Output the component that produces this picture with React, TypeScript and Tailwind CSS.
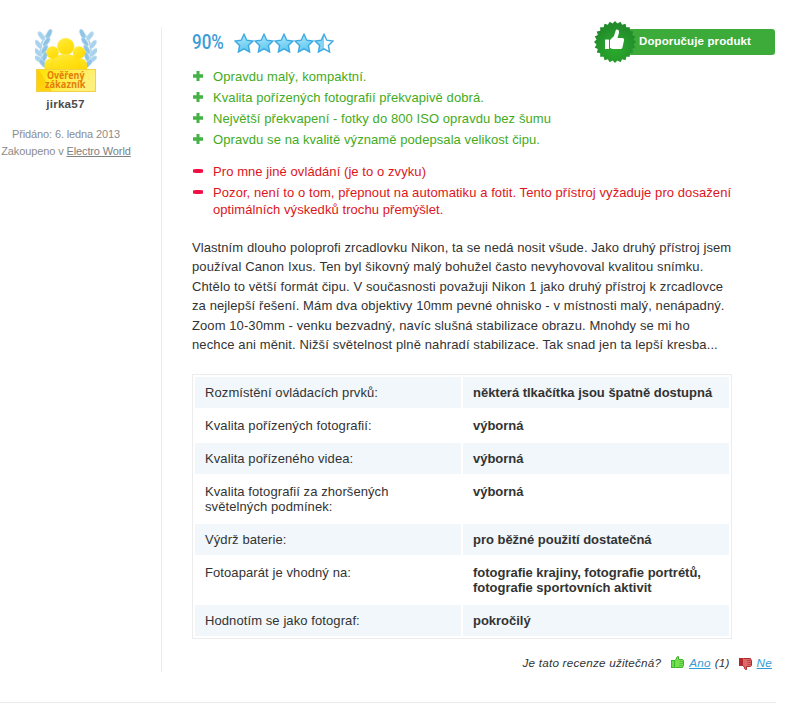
import React from "react";

const pros = [
  "Opravdu malý, kompaktní.",
  "Kvalita pořízených fotografií překvapivě dobrá.",
  "Největší překvapení - fotky do 800 ISO opravdu bez šumu",
  "Opravdu se na kvalitě významě podepsala velikost čipu.",
];

const cons = [
  ["Pro mne jiné ovládání (je to o zvyku)"],
  [
    "Pozor, není to o tom, přepnout na automatiku a fotit. Tento přístroj vyžaduje pro dosažení",
    "optimálních výskedků trochu přemýšlet.",
  ],
];

const review = [
  ["Vlastním dlouho poloprofi zrcadlovku Nikon, ta se nedá nosit všude. Jako druhý přístroj jsem", "tracking-[0.08px]"],
  ["používal Canon Ixus. Ten byl šikovný malý bohužel často nevyhovoval kvalitou snímku.", "tracking-[0.13px]"],
  ["Chtělo to větší formát čipu. V současnosti považuji Nikon 1 jako druhý přístroj k zrcadlovce", "tracking-[0.11px]"],
  ["za nejlepší řešení. Mám dva objektivy 10mm pevné ohnisko - v místnosti malý, nenápadný.", "tracking-[0.1px]"],
  ["Zoom 10-30mm - venku bezvadný, navíc slušná stabilizace obrazu. Mnohdy se mi ho", "tracking-[0.09px]"],
  ["nechce ani měnit. Nižší světelnost plně nahradí stabilizace. Tak snad jen ta lepší kresba...", "tracking-[0.11px]"],
];

const params: [string[], string[]][] = [
  [["Rozmístění ovládacích prvků:"], ["některá tlkačítka jsou špatně dostupná"]],
  [["Kvalita pořízených fotografií:"], ["výborná"]],
  [["Kvalita pořízeného videa:"], ["výborná"]],
  [["Kvalita fotografií za zhoršených", "světelných podmínek:"], ["výborná"]],
  [["Výdrž baterie:"], ["pro běžné použití dostatečná"]],
  [["Fotoaparát je vhodný na:"], ["fotografie krajiny, fotografie portrétů,", "fotografie sportovních aktivit"]],
  [["Hodnotím se jako fotograf:"], ["pokročilý"]],
];

const Lines = ({ lines }: { lines: string[] }) => (
  <>
    {lines.map((l) => (
      <span key={l} className="block whitespace-nowrap">
        {l}
      </span>
    ))}
  </>
);

const leaves: [number, number, number][] = [
  [14, 5, 25],
  [6.5, 7, -35],
  [11.5, 13, 35],
  [3.5, 15.5, -35],
  [9.5, 20.5, 30],
  [3, 23.5, -45],
  [9.5, 28, 20],
  [4, 30.5, -55],
  [8, 34.5, -40],
];

const Laurel = () => (
  <>
    <path d="M13 4C8 9 5 16 5.500 24c.3 5 2 8 5 12" fill="none" stroke="#a5cfe8" strokeWidth="1.500" />
    {leaves.map(([x, y, r], i) => (
      <ellipse
        key={i}
        cx={x}
        cy={y}
        rx="2.300"
        ry="5.200"
        transform={`rotate(${r} ${x} ${y})`}
        fill={i % 2 ? "#a9d3ec" : "#8fc4e6"}
        stroke="#cfe7f5"
        strokeWidth=".5"
      />
    ))}
  </>
);

const VerifiedBadge = () => (
  <svg width="62" height="64" viewBox="0 0 62 64" className="block">
    <defs>
      <linearGradient id="gold" x1="0" y1="0" x2=".6" y2="1">
        <stop offset="0" stopColor="#ffec4a" />
        <stop offset=".5" stopColor="#ffe31c" />
        <stop offset="1" stopColor="#ffda08" />
      </linearGradient>
      <linearGradient id="plate" x1="0" y1="0" x2="1" y2=".35">
        <stop offset="0" stopColor="#ffe000" />
        <stop offset=".45" stopColor="#ffed38" />
        <stop offset="1" stopColor="#fff07c" />
      </linearGradient>
    </defs>
    <Laurel />
    <g transform="translate(61.500 0) scale(-1 1)">
      <Laurel />
    </g>
    <g fill="url(#gold)">
      <path d="M9.500 42v-6c0-4 3-7 8-7h26c5 0 8.500 3 8.500 7v6z" />
      <circle cx="17.500" cy="23.500" r="6.200" />
      <circle cx="44" cy="23.500" r="6.200" />
      <path d="M17 42V35c0-6 5-9.500 13.700-9.500S44.500 29 44.500 35v7z" stroke="#ffd000" strokeWidth=".5" />
      <circle cx="30.700" cy="17.500" r="8.600" stroke="#fff3a0" strokeWidth=".5" />
    </g>
    <rect x="1.500" y="40.500" width="59" height="22" fill="url(#plate)" stroke="#f3d04a" />
    <path d="M2 41h2L17 62H2z" fill="#ffc800" opacity=".7" />
    <text fill="#e57d08" fontFamily="'Open Sans', 'Noto Sans', sans-serif" fontSize="9.800" fontWeight="700">
      <tspan x="12" y="50" textLength="37.500" lengthAdjust="spacingAndGlyphs">
        Ověřený
      </tspan>
      <tspan x="10" y="59" textLength="40.500" lengthAdjust="spacingAndGlyphs">
        zákazník
      </tspan>
    </text>
  </svg>
);

const starPath = "M10 1.300L12.800 7.200L19 8.100L14.400 12.500L15.600 19L10 15.900L4.400 19L5.600 12.500L1 8.100L7.200 7.200Z";

const Star = ({ half = false }: { half?: boolean }) => (
  <svg width="20" height="20" viewBox="0 0 20 20" className="block">
    <defs>
      <linearGradient id={half ? "starHalf" : "star"} x1="0" y1="0" x2={half ? "1" : ".3"} y2={half ? "0" : "1"}>
        <stop offset="0" stopColor={half ? "#8ddaf5" : "#b9ebfb"} />
        <stop offset={half ? ".5" : ".9"} stopColor={half ? "#7ed3f3" : "#68cbf0"} />
        {half && <stop offset=".5" stopColor="#ffffff" />}
      </linearGradient>
    </defs>
    <path d={starPath} fill={half ? "url(#starHalf)" : "url(#star)"} stroke="#3aa8e2" strokeWidth="1.400" />
  </svg>
);

const Plus = () => (
  <svg width="10" height="10" viewBox="0 0 10 10" className="mt-[3px] block shrink-0">
    <path d="M3.500 0h3v3.200H10v3.600H6.500V10h-3V6.800H0V3.200h3.500z" fill="#45b245" />
  </svg>
);

const Minus = () => (
  <svg width="10" height="4" viewBox="0 0 10 4" className="mt-[6px] block shrink-0">
    <path d="M0 .5L3 0h4l3 .5v3L7 4H3L0 3.500z" fill="#f20d42" />
  </svg>
);

const sealPoints = Array.from({ length: 48 }, (_, i) => {
  const a = (i * Math.PI) / 24;
  const r = i % 2 ? 18.6 : 21;
  return `${(21 + r * Math.sin(a)).toFixed(2)},${(21 - r * Math.cos(a)).toFixed(2)}`;
}).join(" ");

const Seal = () => (
  <svg width="42" height="42" viewBox="0 0 42 42" className="absolute -left-[20px] -top-[8px]">
    <defs>
      <radialGradient id="seal" cx=".5" cy=".65" r=".55">
        <stop offset="0" stopColor="#2bae2c" />
        <stop offset="1" stopColor="#228b2b" />
      </radialGradient>
    </defs>
    <polygon points={sealPoints} fill="url(#seal)" />
    <rect x="11" y="18.500" width="4" height="9.500" rx=".5" fill="#fff" />
    <path
      d="M16 19L20 15L21.700 9.500C22 8 25 8 25 11C25 13 24 14.500 23.600 17H28.300C29.800 17 30.300 18 30 19.500L28.500 26.200C28.200 27.500 27.400 28 26 28H18.500L16 27z"
      fill="#fff"
    />
  </svg>
);

const Thumb = ({ down = false }: { down?: boolean }) => (
  <svg width="13" height="13" viewBox="0 0 13 13" className="block shrink-0">
    <g
      transform={down ? "matrix(1 0 0 -1 0 13)" : undefined}
      fill={down ? "#dd6a6a" : "#76e052"}
      stroke={down ? "#b02a2e" : "#3cb526"}
    >
      <rect x=".5" y="4.500" width="3" height="7" fill={down ? "#b9262b" : "#6bdc4d"} />
      <path d="M3.500 4.500L5.500 3V1.500L6.500 .5H7.500V3.500H11.500L12.500 4.500V9L11.500 11.500H4.500L3.500 10.500z" />
      <path d="M8.500 5.500h3.500M8.500 7.500h3.500M8 9.500h3.500" strokeWidth=".6" />
    </g>
  </svg>
);

export default function App() {
  return (
    <div className="h-[710px] w-[792px] overflow-hidden bg-white pt-[27px] font-['Liberation_Sans',Arial,sans-serif] text-[13px] text-[#333]">
      <article className="h-[676px] w-[776px] border-b border-[#ececec]">
        <div className="flex h-[645px]">
          <aside className="flex w-[162px] shrink-0 flex-col border-r border-[#ececec] pt-[2px]">
            <div className="flex w-[132px] flex-col items-center whitespace-nowrap">
              <VerifiedBadge />
              <strong className="mr-[1px] mt-[3px] text-[11.700px] leading-[16px] tracking-[0.2px] text-[#4c4c4c]">jirka57</strong>
              <div className="mt-[14px] text-center text-[11px] leading-[17px] tracking-[-0.12px] text-[#8c8c8c]">
                <p>Přidáno: 6. ledna 2013</p>
                <p>
                  Zakoupeno v <a className="text-[#808080] underline">Electro World</a>
                </p>
              </div>
            </div>
          </aside>

          <main className="flex grow flex-col pl-[30px]">
            <header className="flex h-[41px] items-start justify-between">
              <div className="flex items-center pt-[4px]">
                <div className="w-[42px]">
                  <span className="block w-[37px] origin-left scale-x-[0.87] font-[Roboto,sans-serif] text-[19.500px] font-medium leading-[24px] text-[#3c9cd7]">
                    90%
                  </span>
                </div>
                <div className="flex">
                  <Star />
                  <Star />
                  <Star />
                  <Star />
                  <Star half />
                </div>
              </div>
              <div className="relative mr-px mt-[2px] flex h-[26px] w-[161px] items-center rounded-[3px] bg-[#3cab39] pl-[25px] text-[11.500px] font-bold text-white">
                <Seal />
                <span className="whitespace-nowrap tracking-[0.12px]">Doporučuje produkt</span>
              </div>
            </header>

            <ul className="flex flex-col gap-[4px] leading-[17px] tracking-[0.075px] text-[#43ab22]">
              {pros.map((p) => (
                <li key={p} className="flex gap-[10px] pl-px">
                  <Plus />
                  <span className="whitespace-nowrap">{p}</span>
                </li>
              ))}
            </ul>
            <ul className="mt-[15px] flex flex-col gap-[4px] leading-[17px] tracking-[0.075px] text-[#dd1520]">
              {cons.map((c) => (
                <li key={c[0]} className="flex gap-[10px] pl-px">
                  <Minus />
                  <div>
                    <Lines lines={c} />
                  </div>
                </li>
              ))}
            </ul>

            <div className="mt-[19.500px] leading-[19.500px]">
              {review.map(([line, tracking]) => (
                <span key={line} className={`block whitespace-nowrap ${tracking}`}>
                  {line}
                </span>
              ))}
            </div>

            <div className="mt-[19.500px] flex w-[540px] flex-col gap-[2px] border border-[#ececec] p-[2px] leading-[15px]">
              {params.map(([name, value], i) => (
                <div key={name[0]} className="flex gap-[2px]">
                  <div className={`w-[266px] px-[10px] py-[8px] tracking-[0.09px] ${i % 2 === 0 ? "bg-[#f1f7fa]" : ""}`}>
                    <Lines lines={name} />
                  </div>
                  <div
                    className={`w-[266px] px-[10px] py-[8px] font-bold tracking-[-0.02px] ${i % 2 === 0 ? "bg-[#f1f7fa]" : ""}`}
                  >
                    <Lines lines={value} />
                  </div>
                </div>
              ))}
            </div>

            <footer className="mt-[16px] flex items-center justify-end whitespace-nowrap pr-[4px] text-[11.700px] italic leading-[16px] tracking-[0.22px]">
              <span>Je tato recenze užitečná?</span>
              <span className="-mt-[2px] ml-[10px]">
                <Thumb />
              </span>
              <a className="ml-[5px] text-[#359bd8] underline">Ano</a>
              <span className="ml-[4px]">(1)</span>
              <span className="ml-[9px]">
                <Thumb down />
              </span>
              <a className="ml-[5px] text-[#359bd8] underline">Ne</a>
            </footer>
          </main>
        </div>
      </article>
    </div>
  );
}
